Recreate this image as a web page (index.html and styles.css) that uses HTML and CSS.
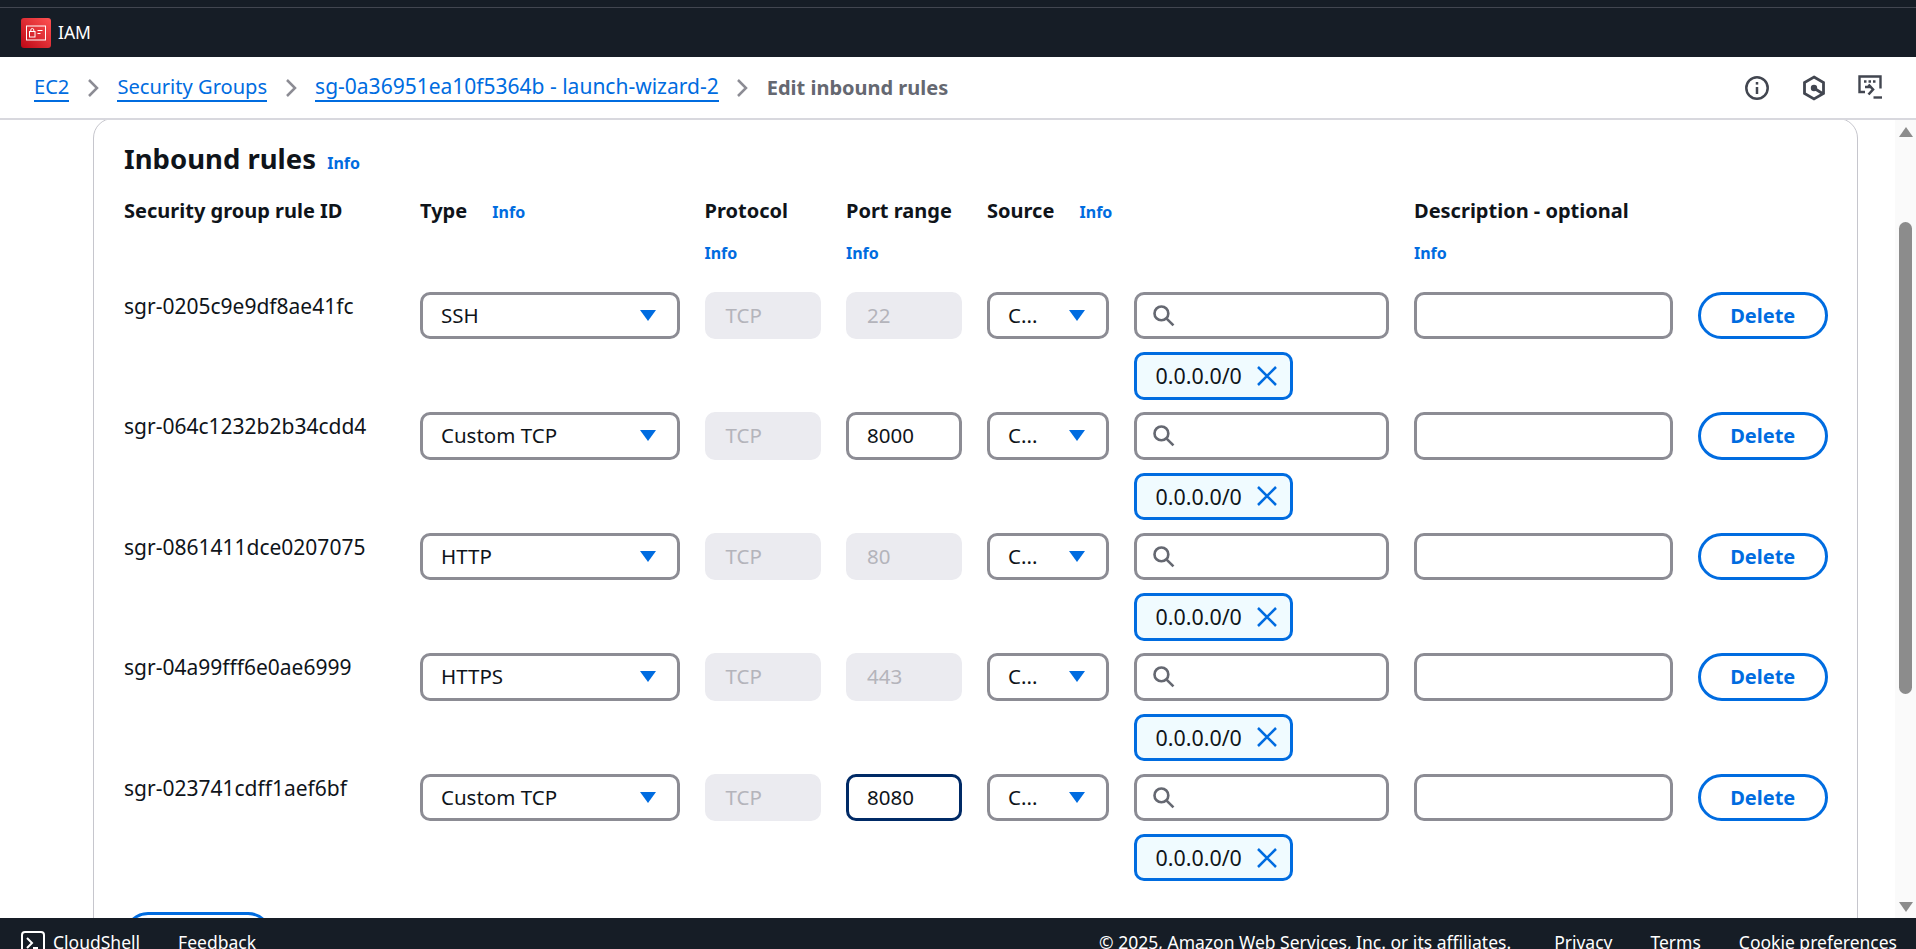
FILE: index.html
```html
<!DOCTYPE html>
<html lang="en">
<head>
    <meta charset="UTF-8">
    <meta name="viewport" content="width=device-width, initial-scale=1.0">
    <title>Edit inbound rules</title>

    <link rel="stylesheet" href="styles.css">

</head>
<body>

    <div class="app">

        <!-- Top navigation -->
        <header class="topbar">
            <div class="topbar-inner">
                <span class="service-logo">
                    <svg width="30" height="30" viewBox="0 0 30 30">
                        <defs>
                            <linearGradient id="logoFill" x1="0" y1="1" x2="1" y2="0">
                                <stop offset="0" stop-color="#bd0816"/>
                                <stop offset="1" stop-color="#ff5252"/>
                            </linearGradient>
                        </defs>
                        <rect width="30" height="30" rx="3" fill="url(#logoFill)"/>
                        <rect x="5.5" y="8" width="19" height="14" fill="none" stroke="#fff" stroke-width="1"/>
                        <rect x="8.5" y="13.5" width="5.5" height="5.5" fill="none" stroke="#fff" stroke-width="1"/>
                        <path d="M9.8 13.5v-1.5a1.5 1.5 0 0 1 3 0v1.5" fill="none" stroke="#fff" stroke-width="1"/>
                        <path d="M16.5 12.5h5M16.5 15.5h3" stroke="#fff" stroke-width="1"/>
                    </svg>
                </span>
                <span class="service-name">IAM</span>
            </div>
        </header>

        <!-- Breadcrumbs -->
        <nav class="crumbs">
            <a class="crumb" href="#">EC2</a>
            <svg class="crumb-sep" width="13" height="20" viewBox="0 0 13 20"><path d="M2 2l8 8-8 8" fill="none" stroke="#8c8c94" stroke-width="2.5"/></svg>
            <a class="crumb" href="#">Security Groups</a>
            <svg class="crumb-sep" width="13" height="20" viewBox="0 0 13 20"><path d="M2 2l8 8-8 8" fill="none" stroke="#8c8c94" stroke-width="2.5"/></svg>
            <a class="crumb crumb-id" href="#">sg-0a36951ea10f5364b - launch-wizard-2</a>
            <svg class="crumb-sep" width="13" height="20" viewBox="0 0 13 20"><path d="M2 2l8 8-8 8" fill="none" stroke="#8c8c94" stroke-width="2.5"/></svg>
            <span class="crumb-current">Edit inbound rules</span>

            <div class="page-tools">
                <svg width="26" height="26" viewBox="0 0 26 26" fill="none" stroke="#424650" stroke-width="2.5">
                    <circle cx="13" cy="13" r="10.7"/>
                    <path d="M13 12v7"/>
                    <path d="M13 7v2.6"/>
                </svg>
                <svg width="24" height="26" viewBox="0 0 24 26" fill="none" stroke="#424650" stroke-width="2.8">
                    <path d="M12 2l9.5 5.5v11L12 24l-9.5-5.5v-11z"/>
                    <circle cx="12" cy="13" r="1.8" fill="#424650"/>
                    <path d="M12.5 13.5l8 5"/>
                </svg>
                <svg width="24" height="25" viewBox="0 0 24 25" fill="none" stroke="#424650" stroke-width="2.4">
                    <path d="M7 17H1.5V1.5h21v12"/>
                    <path d="M6 6.5h2.5M10.5 6.5H13M15 6.5h2.5" stroke-width="2.5"/>
                    <path d="M7 11h6.5M10.5 8.5l4.5 5-4.5 5" stroke-width="2.6" transform="translate(0 1)"/>
                    <path d="M15.5 22.5H24"/>
                </svg>
            </div>
        </nav>

        <div class="main">
            <div class="content">
                <section class="card">
                    <h2 class="card-title">Inbound rules <a class="info" href="#">Info</a></h2>

                    <div class="rule-grid head">
                        <div class="head-cell">Security group rule ID</div>
                        <div class="head-cell">Type <a class="info info-side" href="#">Info</a></div>
                        <div class="head-cell">Protocol<a class="info info-below" href="#">Info</a></div>
                        <div class="head-cell">Port range<a class="info info-below" href="#">Info</a></div>
                        <div class="head-cell">Source <a class="info info-side" href="#">Info</a></div>
                        <div></div>
                        <div class="head-cell">Description - optional<a class="info info-below" href="#">Info</a></div>
                        <div></div>
                    </div>

                    <!-- sgr-0205 -->
                    <div class="rule-grid rule">
                        <div class="rule-id">sgr-0205c9e9df8ae41fc</div>
                        <div class="field select">SSH<span class="caret"></span></div>
                        <div class="field disabled">TCP</div>
                        <div class="field disabled">22</div>
                        <div class="field select">C...<span class="caret"></span></div>
                        <div class="source-col">
                            <div class="field search">
                                <svg width="23" height="23" viewBox="0 0 22 22" fill="none" stroke="#656871" stroke-width="2.5"><circle cx="9" cy="9" r="6.6"/><path d="M14 14l6.5 6.5"/></svg>
                            </div>
                            <div class="chip">0.0.0.0/0
                                <svg width="22" height="22" viewBox="0 0 22 22" fill="none" stroke="#006ce0" stroke-width="2.5"><path d="M2 2l18 18M20 2L2 20"/></svg>
                            </div>
                        </div>
                        <div class="field"></div>
                        <button class="delete-btn">Delete</button>
                    </div>

                    <!-- sgr-064c -->
                    <div class="rule-grid rule">
                        <div class="rule-id">sgr-064c1232b2b34cdd4</div>
                        <div class="field select">Custom TCP<span class="caret"></span></div>
                        <div class="field disabled">TCP</div>
                        <div class="field">8000</div>
                        <div class="field select">C...<span class="caret"></span></div>
                        <div class="source-col">
                            <div class="field search">
                                <svg width="23" height="23" viewBox="0 0 22 22" fill="none" stroke="#656871" stroke-width="2.5"><circle cx="9" cy="9" r="6.6"/><path d="M14 14l6.5 6.5"/></svg>
                            </div>
                            <div class="chip">0.0.0.0/0
                                <svg width="22" height="22" viewBox="0 0 22 22" fill="none" stroke="#006ce0" stroke-width="2.5"><path d="M2 2l18 18M20 2L2 20"/></svg>
                            </div>
                        </div>
                        <div class="field"></div>
                        <button class="delete-btn">Delete</button>
                    </div>

                    <!-- sgr-0861 -->
                    <div class="rule-grid rule">
                        <div class="rule-id">sgr-0861411dce0207075</div>
                        <div class="field select">HTTP<span class="caret"></span></div>
                        <div class="field disabled">TCP</div>
                        <div class="field disabled">80</div>
                        <div class="field select">C...<span class="caret"></span></div>
                        <div class="source-col">
                            <div class="field search">
                                <svg width="23" height="23" viewBox="0 0 22 22" fill="none" stroke="#656871" stroke-width="2.5"><circle cx="9" cy="9" r="6.6"/><path d="M14 14l6.5 6.5"/></svg>
                            </div>
                            <div class="chip">0.0.0.0/0
                                <svg width="22" height="22" viewBox="0 0 22 22" fill="none" stroke="#006ce0" stroke-width="2.5"><path d="M2 2l18 18M20 2L2 20"/></svg>
                            </div>
                        </div>
                        <div class="field"></div>
                        <button class="delete-btn">Delete</button>
                    </div>

                    <!-- sgr-04a9 -->
                    <div class="rule-grid rule">
                        <div class="rule-id">sgr-04a99fff6e0ae6999</div>
                        <div class="field select">HTTPS<span class="caret"></span></div>
                        <div class="field disabled">TCP</div>
                        <div class="field disabled">443</div>
                        <div class="field select">C...<span class="caret"></span></div>
                        <div class="source-col">
                            <div class="field search">
                                <svg width="23" height="23" viewBox="0 0 22 22" fill="none" stroke="#656871" stroke-width="2.5"><circle cx="9" cy="9" r="6.6"/><path d="M14 14l6.5 6.5"/></svg>
                            </div>
                            <div class="chip">0.0.0.0/0
                                <svg width="22" height="22" viewBox="0 0 22 22" fill="none" stroke="#006ce0" stroke-width="2.5"><path d="M2 2l18 18M20 2L2 20"/></svg>
                            </div>
                        </div>
                        <div class="field"></div>
                        <button class="delete-btn">Delete</button>
                    </div>

                    <!-- sgr-0237, port field has focus -->
                    <div class="rule-grid rule">
                        <div class="rule-id">sgr-023741cdff1aef6bf</div>
                        <div class="field select">Custom TCP<span class="caret"></span></div>
                        <div class="field disabled">TCP</div>
                        <div class="field focused">8080</div>
                        <div class="field select">C...<span class="caret"></span></div>
                        <div class="source-col">
                            <div class="field search">
                                <svg width="23" height="23" viewBox="0 0 22 22" fill="none" stroke="#656871" stroke-width="2.5"><circle cx="9" cy="9" r="6.6"/><path d="M14 14l6.5 6.5"/></svg>
                            </div>
                            <div class="chip">0.0.0.0/0
                                <svg width="22" height="22" viewBox="0 0 22 22" fill="none" stroke="#006ce0" stroke-width="2.5"><path d="M2 2l18 18M20 2L2 20"/></svg>
                            </div>
                        </div>
                        <div class="field"></div>
                        <button class="delete-btn">Delete</button>
                    </div>

                    <!-- only the top edge of this button shows above the footer -->
                    <button class="add-btn" aria-label="Add rule"></button>
                </section>
            </div>

            <div class="scrollbar">
                <span class="arrow-up"></span>
                <span class="thumb"></span>
                <span class="arrow-down"></span>
            </div>
        </div>

        <!-- Console footer, cut off by the window -->
        <footer class="footer">
            <span class="footer-item shell">
                <svg width="24" height="24" viewBox="0 0 24 24" fill="none" stroke="#fff" stroke-width="2"><rect x="1" y="1" width="22" height="22" rx="3"/><path d="M6 7l5 5-5 5M12 17h5"/></svg>
                CloudShell
            </span>
            <span class="footer-item feedback">Feedback</span>
            <span class="footer-right">
                <span class="copyright">© 2025, Amazon Web Services, Inc. or its affiliates.</span>
                <span>Privacy</span>
                <span>Terms</span>
                <span>Cookie preferences</span>
            </span>
        </footer>
    </div>

</body>
</html>
```

FILE: styles.css
```css
* {
    box-sizing: border-box;
}

body {
    font-family: "Noto Sans", Arial, sans-serif;
    font-size: 20.5px;
    color: #0f141a;
    background-color: #fff;
    margin: 0;
    overflow: hidden;
}

.app {
    height: 100vh;
    display: flex;
    flex-direction: column;
    overflow: hidden;
}

/* top bar */
.topbar {
    flex: 0 0 57px;
    background-color: #161d26;
    padding-top: 7px;
}

.topbar-inner {
    height: 50px;
    border-top: 1px solid #424650;
    display: flex;
    align-items: center;
    gap: 7px;
    padding-left: 21px;
    color: #fff;
}

.service-logo {
    display: block;
    width: 30px;
    height: 30px;
}

.service-name {
    font-size: 17.5px;
    line-height: 26px;
    margin-top: -2px;
}

/* breadcrumbs */
.crumbs {
    flex: 0 0 63px;
    display: flex;
    align-items: center;
    padding: 0 34px;
    gap: 17.5px;
    border-bottom: 2px solid #d8d8de;
    background-color: #fff;
    font-size: 20.1px;
}

.crumb {
    color: #006ce0;
    text-decoration: none;
    border-bottom: 2px solid #006ce0;
    line-height: 27px;
}

.crumb-id {
    font-size: 21px;
}

.crumb-sep {
    flex: none;
}

.crumb-current {
    color: #656871;
    font-weight: 700;
    font-size: 20px;
}

.page-tools {
    margin-left: auto;
    display: flex;
    align-items: center;
    gap: 32px;
}

/* main area */
.main {
    flex: 1;
    min-height: 0;
    display: flex;
    overflow: hidden;
}

.content {
    flex: 1;
    min-width: 0;
    padding: 0 37px 0 93px;
}

.card {
    margin-top: -2px;
    height: 900px;
    border: 1px solid #c6c6cd;
    border-radius: 20px;
    padding: 25px 0 0 30px;
}

.card-title {
    margin: 0;
    font-size: 27.5px;
    line-height: 30px;
    font-weight: 700;
}

.info {
    color: #006ce0;
    font-size: 16px;
    font-weight: 700;
    text-decoration: none;
}

.card-title .info {
    margin-left: 4px;
}

.info-side {
    margin-left: 20px;
}

.info-below {
    display: block;
    margin-top: 18px;
}

.rule-grid {
    display: grid;
    grid-template-columns: 271px 259.5px 116.5px 116px 121.5px 255.5px 258.5px 130.5px;
    column-gap: 25px;
}

.head {
    margin-top: 20px;
    height: 93.8px;
}

.head-cell {
    font-size: 20px;
    font-weight: 700;
    line-height: 25px;
    white-space: nowrap;
}

.rule {
    padding-bottom: 12.7px;
}

.rule-id {
    font-size: 21px;
    padding-top: 2px;
    line-height: 25px;
}

.field {
    height: 47.4px;
    border: 3px solid #8c8c94;
    border-radius: 10px;
    padding: 0 18px;
    display: flex;
    align-items: center;
    background-color: #fff;
    line-height: 25px;
}

.select {
    justify-content: space-between;
    padding-right: 21px;
}

.caret {
    width: 0;
    height: 0;
    border-left: 8px solid transparent;
    border-right: 8px solid transparent;
    border-top: 11.5px solid #006ce0;
}

.disabled {
    background-color: #ebebf0;
    border-color: #ebebf0;
    color: #b4b4bb;
}

.focused {
    border-color: #002a66;
}

.search {
    padding-left: 15px;
}

.chip {
    margin-top: 13px;
    width: 159.5px;
    height: 47.4px;
    border: 3px solid #006ce0;
    border-radius: 10px;
    background-color: #f0fbff;
    display: flex;
    align-items: center;
    justify-content: space-between;
    padding: 0 12px 0 19px;
    font-size: 21.4px;
    line-height: 25px;
}

.delete-btn,
.add-btn {
    font-family: inherit;
    font-size: 20px;
    font-weight: 700;
    color: #006ce0;
    background-color: #fff;
    border: 3px solid #006ce0;
    border-radius: 24px;
    height: 47.4px;
    padding: 0;
}

.add-btn {
    display: block;
    width: 148px;
    margin-top: 18px;
}

/* scrollbar */
.scrollbar {
    flex: 0 0 21px;
    background-color: #fafafa;
    display: flex;
    flex-direction: column;
    align-items: center;
    padding-top: 7px;
}

.arrow-up,
.arrow-down {
    width: 0;
    height: 0;
    border-left: 7.5px solid transparent;
    border-right: 7.5px solid transparent;
}

.arrow-up {
    border-bottom: 10px solid #8c8c8c;
}

.arrow-down {
    border-top: 10px solid #8c8c8c;
    margin-top: 208px;
}

.thumb {
    width: 13px;
    height: 472px;
    margin-top: 85px;
    background-color: #8c8c8c;
    border-radius: 7px;
}

/* footer */
.footer {
    flex: 0 0 31px;
    background-color: #161d26;
    color: #fff;
    display: flex;
    align-items: flex-start;
    padding: 12px 19px 0 21px;
    overflow: hidden;
    font-size: 17.5px;
    line-height: 25px;
}

.footer-item {
    display: flex;
    align-items: center;
    gap: 8px;
}

.feedback {
    margin-left: 38px;
}

.footer-right {
    margin-left: auto;
    display: flex;
    gap: 38px;
}

.copyright {
    margin-right: 5px;
}
```
